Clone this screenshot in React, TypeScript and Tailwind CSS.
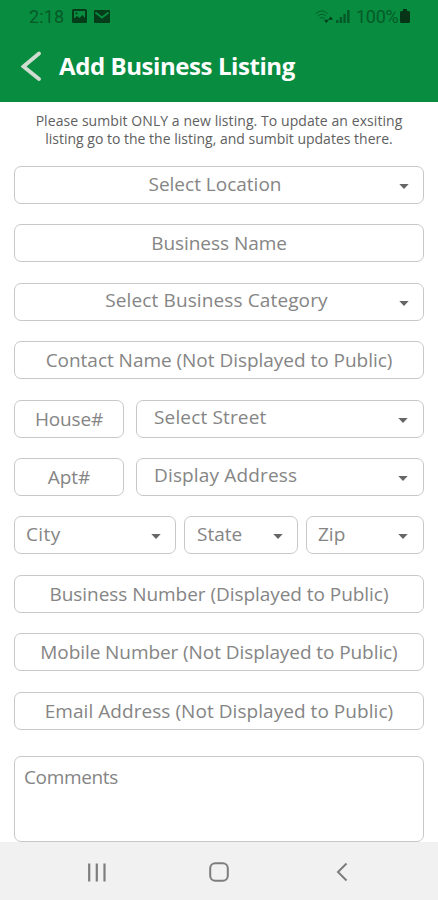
import type { ReactNode } from 'react'
import clsx from 'clsx'

type FieldProps = {
  label: string
  className?: string
  textClassName?: string
}

function TextField({ label, className, textClassName }: FieldProps) {
  return (
    <label className={clsx('flex h-[38px] items-center justify-center rounded-[7px] border border-[#c8c8c8] bg-white', className)}>
      <span className={clsx('whitespace-nowrap leading-6', textClassName)}>{label}</span>
    </label>
  )
}

function SelectField({ label, className, textClassName }: FieldProps) {
  return (
    <button
      type="button"
      className={clsx('flex h-[38px] items-center rounded-[7px] border border-[#c8c8c8] bg-white', className)}
    >
      <span className={clsx('mb-[3px] grow whitespace-nowrap leading-6', textClassName)}>{label}</span>
      <svg className="mt-[3px] h-[5px] w-[10px] shrink-0" viewBox="0 0 10 5" aria-hidden="true">
        <path d="M0.3 0h9.4L5 5z" fill="#666" />
      </svg>
    </button>
  )
}

function Row({ children }: { children: ReactNode }) {
  return <div className="flex h-[38px]">{children}</div>
}

function StatusBar() {
  return (
    <div className="flex h-8 items-center pl-[29px] pr-[29px] font-[Roboto] text-[18px] text-[#065a28]">
      <span className="w-[35px] whitespace-nowrap tracking-[0.1px]">2:18</span>
      <svg className="ml-2 h-[14px] w-[15px]" viewBox="0 0 15 14" aria-hidden="true">
        <path fillRule="evenodd" fill="#053d1a" d="M1.5 0h12Q15 0 15 1.5v11q0 1.5-1.5 1.5h-12Q0 14 0 12.5v-11Q0 0 1.5 0zM2 2v7.500l3-2.500 2.500 2 3-3 2.500 3V2z" />
        <circle cx="4.5" cy="4.2" r="1" fill="#053d1a" />
      </svg>
      <svg className="ml-[7px] h-[13px] w-4" viewBox="0 0 16 13" aria-hidden="true">
        <rect width="16" height="13" rx="1" fill="#053d1a" />
        <path d="M1.5 2.5 8 7.5l6.500-5" fill="none" stroke="#078c40" strokeWidth="1.8" />
      </svg>
      <div className="grow" />
      <svg className="mr-[3px] h-[15px] w-[18px]" viewBox="0 0 19 15" fill="none" stroke="#065a28" aria-hidden="true">
        <path d="M1 4.5Q7 -1.5 13.500 4.5M3.200 7Q7.200 3.200 11.500 7M5 9.500q2.500-2 5 0" strokeWidth="1" />
        <path d="M9.500 11h5L12 14.500zM14 11l2.500-3.500 2.500 3.500z" fill="#053d1a" stroke="none" />
      </svg>
      <svg className="h-[14px] w-[14px]" viewBox="0 0 14 14" fill="#065a28" aria-hidden="true">
        <path d="M0 11h2.500v3H0zM3.700 8h2.500v6H3.700zM7.400 5h2.500v9H7.400zM11.100 1h2.500v13h-2.500z" />
      </svg>
      <span className="ml-[6px] w-[44px] whitespace-nowrap tracking-[-0.3px]">100%</span>
      <svg className="-mr-px h-[14px] w-[10px]" viewBox="0 0 10 14" fill="#053416" aria-hidden="true">
        <path d="M3 0h4v2h1.500Q10 2 10 3.500v9q0 1.500-1.500 1.500h-7Q0 14 0 12.500v-9Q0 2 1.500 2H3z" />
      </svg>
    </div>
  )
}

function Header() {
  return (
    <header className="h-[102px] shrink-0 bg-[#078c40]">
      <StatusBar />
      <div className="flex h-[68px] items-center pl-[21px]">
        <button type="button" aria-label="Back">
          <svg className="h-[32px] w-[21px]" viewBox="0 0 21 32" fill="none" aria-hidden="true">
            <path d="M18 3.500 2.500 16.500 18 29" stroke="#cfdccf" strokeWidth="3.800" strokeLinecap="round" />
          </svg>
        </button>
        <h1 className="ml-[17px] whitespace-nowrap text-[24px] font-bold leading-8 tracking-[-0.42px] text-white">Add Business Listing</h1>
      </div>
    </header>
  )
}

function NavBar() {
  return (
    <nav className="flex h-[58px] shrink-0 items-center bg-[#f1f1f1] pl-[87px] pt-[2px] text-[#7d7d7d]">
      <svg className="h-[19px] w-[20px]" viewBox="0 0 20 19" stroke="currentColor" strokeWidth="2.2" aria-hidden="true">
        <path d="M2.200 .5v18M9.800 .5v18M17.500 .5v18" />
      </svg>
      <svg className="ml-[102px] h-5 w-5" viewBox="0 0 20 20" fill="none" stroke="currentColor" strokeWidth="2" aria-hidden="true">
        <rect x="1.2" y="1.2" width="17.600" height="17.600" rx="5" />
      </svg>
      <svg className="ml-[107px] h-5 w-3" viewBox="0 0 12 20" fill="none" stroke="currentColor" strokeWidth="2" aria-hidden="true">
        <path d="M10.500 1.500 2 10l8.500 8.500" />
      </svg>
    </nav>
  )
}

export default function App() {
  return (
    <div className="flex h-[900px] w-[438px] flex-col overflow-hidden bg-white font-['Open_Sans',sans-serif]">
      <Header />
      <main className="flex grow flex-col px-[14px] pt-[10px] text-[19px] text-[#858585]">
        <p className="h-[54px] text-center text-[14px] leading-[17.5px] text-[#606060]">
          <span className="block whitespace-nowrap tracking-[0.07px]">Please sumbit ONLY a new listing. To update an exsiting</span>
          <span className="block whitespace-nowrap">listing go to the the listing, and sumbit updates there.</span>
        </p>
        <form className="flex flex-col gap-[20.4px]">
          <SelectField label="Select Location" className="pl-4 pr-[14px]" />
          <TextField label="Business Name" textClassName="tracking-[-0.05px]" />
          <SelectField label="Select Business Category" className="pl-[19px] pr-[14px]" textClassName="tracking-[0.12px]" />
          <TextField label="Contact Name (Not Displayed to Public)" textClassName="tracking-[-0.03px]" />
          <Row>
            <TextField label="House#" className="w-[110px]" textClassName="tracking-[-0.15px]" />
            <SelectField label="Select Street" className="ml-3 grow pl-[17px] pr-[15px] text-left" textClassName="tracking-[0.15px]" />
          </Row>
          <Row>
            <TextField label="Apt#" className="w-[110px]" />
            <SelectField label="Display Address" className="ml-3 grow pl-[17px] pr-[15px] text-left" textClassName="tracking-[0.15px]" />
          </Row>
          <Row>
            <SelectField label="City" className="w-[162px] pl-[11px] pr-[14px] text-left" textClassName="tracking-[0.4px]" />
            <SelectField label="State" className="ml-2 w-[114px] pl-3 pr-[14px] text-left" />
            <SelectField label="Zip" className="ml-2 grow pl-[11px] pr-[15px] text-left" />
          </Row>
          <TextField label="Business Number (Displayed to Public)" textClassName="tracking-[-0.05px]" />
          <TextField label="Mobile Number (Not Displayed to Public)" textClassName="tracking-[-0.08px]" />
          <TextField label="Email Address (Not Displayed to Public)" textClassName="tracking-[0.05px]" />
        </form>
        <div className="mt-[26.4px] h-[86px] rounded-[7px] border border-[#c8c8c8] pl-[9px] pt-2">
          <span className="block leading-6 tracking-[-0.35px]">Comments</span>
        </div>
      </main>
      <NavBar />
    </div>
  )
}
